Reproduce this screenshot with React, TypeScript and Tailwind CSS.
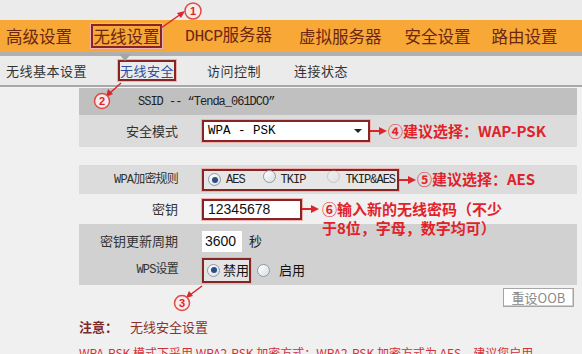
import React from "react";

const mono = { fontFamily: '"Liberation Mono", "Noto Sans CJK SC", monospace' };

function Radio({ checked = false, faded = false }: { checked?: boolean; faded?: boolean }) {
  return (
    <span
      className={`inline-flex h-[13px] w-[13px] shrink-0 items-center justify-center rounded-full border border-[#8e99a5] bg-gradient-to-br from-white to-[#d9dee4] ${
        faded ? "opacity-40" : ""
      }`}
    >
      {checked && <span className="h-[6px] w-[6px] rounded-full bg-[#2c4d84]" />}
    </span>
  );
}

function Arrow() {
  return (
    <svg width="17" height="10" viewBox="0 0 17 10" className="shrink-0">
      <line x1="0" y1="5" x2="10" y2="5" stroke="#d9262d" strokeWidth="2" />
      <polygon points="9,1 17,5 9,9" fill="#d9262d" />
    </svg>
  );
}

function Label({ children, serif = false }: { children: React.ReactNode; serif?: boolean }) {
  return (
    <div
      className={`w-[99px] shrink-0 whitespace-nowrap text-right text-[#333] ${serif ? "text-[12px] tracking-[-0.8px]" : "text-[13px]"}`}
      style={serif ? mono : undefined}
    >
      {children}
    </div>
  );
}

const redBox = "border-2 border-[#872424] shadow-[0_0_0_1px_#efb0b0]";
const note = "text-[15px] font-bold text-[#e0232b] whitespace-nowrap";

export default function App() {
  return (
    <div
      className="relative h-[354px] w-[582px] overflow-hidden bg-[#f0f0f0]"
      style={{ fontFamily: '"Noto Sans CJK SC", "Noto Sans", sans-serif' }}
    >
      {/* top strip */}
      <div className="h-[20px] bg-[#ebebeb]" />

      {/* main nav */}
      <div className="flex h-[32px] items-center whitespace-nowrap bg-[#f7a836] pl-[6px] text-[16.5px] text-[#6c2611]">
        <span>高级设置</span>
        <span className={`ml-[19px] flex h-[24px] w-[71px] items-center justify-center ${redBox}`}>无线设置</span>
        <span className="ml-[23px]">
          <span className="tracking-[-0.5px]" style={mono}>
            DHCP
          </span>
          服务器
        </span>
        <span className="ml-[27px]">虚拟服务器</span>
        <span className="ml-[23px]">安全设置</span>
        <span className="ml-[21px]">路由设置</span>
      </div>
      <div className="relative h-[4px] bg-[#b0b0b0]">
        <span className="absolute left-[119px] top-[2px] h-0 w-0 border-x-[6px] border-t-[7px] border-x-transparent border-t-[#a6a6a6]" />
      </div>

      {/* sub nav */}
      <div className="flex h-[29px] items-center whitespace-nowrap bg-[#ebebeb] pl-[6px] text-[13px] tracking-[0.5px] text-[#333]">
        <span>无线基本设置</span>
        <span className={`ml-[31px] flex h-[21px] w-[58px] items-center justify-center text-[#2f4f9e] ${redBox}`}>
          无线安全
        </span>
        <span className="ml-[31px]">访问控制</span>
        <span className="ml-[33px]">连接状态</span>
      </div>
      <div className="h-[2px] bg-[#a8a8a8]" />
      <div className="h-[1px] bg-[#f4f4f4]" />

      {/* content */}
      <div className="flex">
        <div className="w-[79px] shrink-0" />
        <div className="w-[498px]">
          <div
            className="flex h-[27px] items-center whitespace-nowrap bg-[#c0c0c0] pl-[59px] text-[12px] tracking-[-1px] text-[#222]"
            style={mono}
          >
            SSID -- “Tenda_061DCO”
          </div>

          <div className="flex h-[32px] items-center bg-[#dcdcdc]">
            <Label>安全模式</Label>
            <div
              className={`ml-[24px] flex h-[22px] w-[168px] items-center justify-between bg-white pl-[4px] pr-[6px] text-[12.5px] ${redBox}`}
              style={mono}
            >
              <span>WPA - PSK</span>
              <span className="h-0 w-0 border-x-[4px] border-t-[4px] border-x-transparent border-t-[#222]" />
            </div>
            <Arrow />
            <span className={`ml-[1px] ${note}`}>④建议选择：WAP-PSK</span>
          </div>

          <div className="h-[18px]" />

          <div className="flex h-[29px] items-center bg-[#dcdcdc]">
            <Label serif>WPA加密规则</Label>
            <div
              className={`ml-[24px] flex h-[22px] w-[197px] items-center whitespace-nowrap bg-[#e6e6e6] pl-[4px] text-[12px] tracking-[-1px] text-[#222] ${redBox}`}
              style={mono}
            >
              <Radio checked />
              <span className="ml-[5px]">AES</span>
              <span className="ml-[18px]">
                <Radio />
              </span>
              <span className="ml-[5px]">TKIP</span>
              <span className="ml-[22px]">
                <Radio faded />
              </span>
              <span className="ml-[5px]">TKIP&amp;AES</span>
            </div>
            <Arrow />
            <span className={`ml-[1px] ${note}`}>⑤建议选择：AES</span>
          </div>

          <div className="relative flex h-[30px] items-center">
            <Label>密钥</Label>
            <div
              className={`ml-[24px] flex h-[21px] w-[100px] items-center bg-white pl-[4px] text-[14px] text-[#111] ${redBox}`}
              style={{ fontFamily: '"Liberation Sans", sans-serif' }}
            >
              12345678
            </div>
            <Arrow />
            <div className={`absolute left-[243px] top-[5px] z-10 leading-[19px] ${note}`}>
              ⑥输入新的无线密码（不少
              <br />
              于8位，字母，数字均可）
            </div>
          </div>

          <div className="bg-[#d1d1d1] pt-[3px]">
            <div className="flex h-[28px] items-center">
              <Label>密钥更新周期</Label>
              <div
                className="ml-[24px] flex h-[21px] w-[40px] items-center bg-white pl-[3px] text-[14px] text-[#111]"
                style={{ fontFamily: '"Liberation Sans", sans-serif' }}
              >
                3600
              </div>
              <span className="ml-[7px] text-[13px] text-[#222]">秒</span>
            </div>
            <div className="flex h-[30px] items-center">
              <Label serif>WPS设置</Label>
              <div
                className={`ml-[24px] flex h-[25px] w-[49px] items-center whitespace-nowrap bg-[#e4e4e4] pl-[3px] text-[13px] text-[#111] ${redBox}`}
              >
                <Radio checked />
                <span className="ml-[3px]">禁用</span>
              </div>
              <span className="ml-[6px]">
                <Radio />
              </span>
              <span className="ml-[9px] text-[13px] text-[#111]">启用</span>
            </div>
          </div>

          <div className="flex justify-end pr-[3px] pt-[3px]">
            <button className="h-[19px] w-[71px] border border-[#a5a5a5] bg-white text-[13px] leading-none text-[#8a8a8a] shadow-[inset_-1px_-1px_0_#d0d0d0]">
              重设OOB
            </button>
          </div>

          <div className="mt-[10px] flex items-center text-[13px]">
            <span className="font-bold text-[#7a2b2b]">注意：</span>
            <span className="ml-[12px] text-[#8a3232]">无线安全设置</span>
          </div>

          <div className="mt-[9px] whitespace-nowrap text-[12px] leading-[14px] text-[#d0303a]">
            WPA-PSK 模式下采用 WPA2-PSK 加密方式；WPA2-PSK 加密方式为 AES，建议您启用
          </div>
        </div>
      </div>

      {/* annotation callouts */}
      <svg className="pointer-events-none absolute left-0 top-0" width="582" height="354">
        <g stroke="#d9262d" strokeWidth="1.5" fill="none">
          <line x1="161" y1="28" x2="181" y2="14" />
          <line x1="121" y1="83" x2="110" y2="93" />
          <line x1="202" y1="286" x2="190" y2="295" />
        </g>
        <g fill="#d9262d">
          <polygon points="185,11 177,13 181,18" />
          <polygon points="106,97 108,89 113,94" />
          <polygon points="186,298 189,291 193,296" />
        </g>
        <g fill="#fbeaea" stroke="#dd4a44" strokeWidth="1.5">
          <circle cx="193" cy="11" r="8" />
          <circle cx="102" cy="101" r="7.5" />
          <circle cx="182" cy="303" r="7.5" />
        </g>
        <g fill="#d9262d" fontSize="11" fontWeight="bold" textAnchor="middle" fontFamily="Liberation Sans, sans-serif">
          <text x="193" y="15">1</text>
          <text x="102" y="105">2</text>
          <text x="182" y="307">3</text>
        </g>
      </svg>
    </div>
  );
}
